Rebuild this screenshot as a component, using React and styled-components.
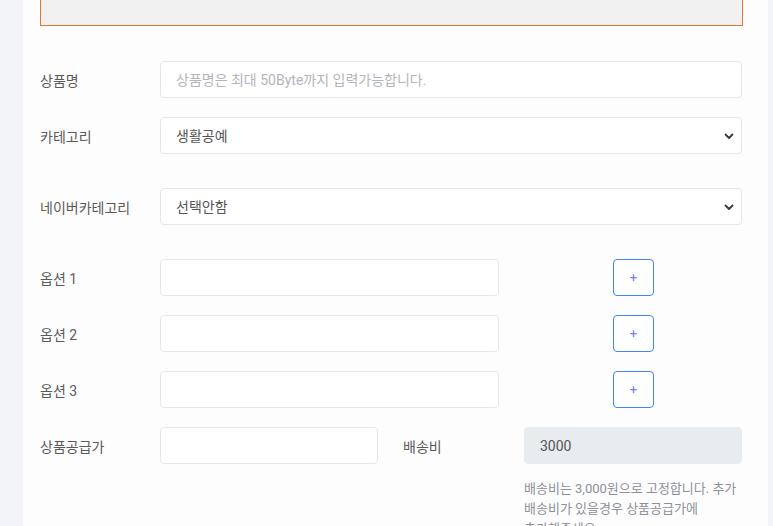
import styled, { createGlobalStyle } from 'styled-components'

const GlobalStyle = createGlobalStyle`
  html, body {
    margin: 0;
    padding: 0;
    background: #f3f4f8;
  }
  body {
    font-family: Roboto, "Noto Sans CJK KR", "Noto Sans", sans-serif;
    color: #555;
  }
`

const Chevron = () => (
  <svg width='10' height='8' viewBox='0 0 10 8'>
    <path d='M1.5 2.5 L5 6 L8.5 2.5' fill='none' stroke='#343a40' strokeWidth='1.8' strokeLinecap='round' strokeLinejoin='round' />
  </svg>
)

const App = () => {
  return (
    <>
      <GlobalStyle />
      <Viewport>
        <Card>
          <Notice>
            <NoticeTitle>상품 정보 등록 안내</NoticeTitle>
          </Notice>

          <Row $mb={19}>
            <Label>상품명</Label>
            <Input placeholder='상품명은 최대 50Byte까지 입력가능합니다.' />
          </Row>

          <Row $mb={34}>
            <Label>카테고리</Label>
            <SelectWrap>
              <Select defaultValue='생활공예'>
                <option>생활공예</option>
              </Select>
              <Arrow><Chevron /></Arrow>
            </SelectWrap>
          </Row>

          <Row $mb={34}>
            <Label>네이버카테고리</Label>
            <SelectWrap>
              <Select defaultValue='선택안함'>
                <option>선택안함</option>
              </Select>
              <Arrow><Chevron /></Arrow>
            </SelectWrap>
          </Row>

          {[1, 2, 3].map((n) => (
            <Row key={n} $cols='120px 339px 114px 41px' $mb={19}>
              <Label>옵션 {n}</Label>
              <Input />
              <span />
              <AddButton type='button'>+</AddButton>
            </Row>
          ))}

          <Row $cols='120px 218px 146px 218px' $mb={15}>
            <Label>상품공급가</Label>
            <Input />
            <Label $indent={25}>배송비</Label>
            <Input value='3000' disabled readOnly />
          </Row>

          <Row $cols='484px 218px' $mb={0}>
            <span />
            <Help>
              배송비는 3,000원으로 고정합니다. 추가
              <br />
              배송비가 있을경우 상품공급가에
              <br />
              추가해주세요.
            </Help>
          </Row>
        </Card>
      </Viewport>
    </>
  )
}

const Viewport = styled.div`
  height: 526px;
  overflow: hidden;
  display: flex;
  padding: 0 5px 0 23px;
`

const Card = styled.div`
  flex: 1;
  background: #fdfdfe;
  padding: 0 25px 0 17px;
  margin-top: -44px;
`

const Notice = styled.div`
  width: 703px;
  height: 70px;
  box-sizing: border-box;
  background: #f1f1f2;
  border: 1px solid #e5722c;
  padding-top: 24px;
  text-align: center;
  margin-bottom: 35px;
`

const NoticeTitle = styled.div`
  font-size: 16px;
  line-height: 22px;
  font-weight: 700;
  color: #2b2b35;
`

const Row = styled.div`
  display: grid;
  grid-template-columns: ${(p) => p.$cols || '120px 582px'};
  align-items: center;
  margin-bottom: ${(p) => p.$mb}px;
`

const Label = styled.label`
  font-size: 14px;
  color: #5a5a5a;
  padding-left: ${(p) => p.$indent || 0}px;
`

const Input = styled.input`
  height: 37px;
  width: 100%;
  box-sizing: border-box;
  border: 1px solid #e6e7ee;
  border-radius: 4px;
  background: #fff;
  padding: 0 15px;
  font-family: Roboto, "Noto Sans CJK KR", sans-serif;
  font-size: 14px;
  color: #555;
  outline: none;

  &::placeholder {
    color: #b3b5bc;
  }

  &:disabled {
    background: #e9ecef;
    border-color: #e9ecef;
    color: #555;
  }
`

const SelectWrap = styled.div`
  position: relative;
`

const Select = styled.select`
  appearance: none;
  width: 100%;
  height: 37px;
  box-sizing: border-box;
  border: 1px solid #e6e7ee;
  border-radius: 4px;
  background: #fff;
  padding: 0 15px;
  font-family: Roboto, "Noto Sans CJK KR", sans-serif;
  font-size: 14px;
  color: #555;
  outline: none;
`

const Arrow = styled.span`
  position: absolute;
  right: 8px;
  top: 50%;
  transform: translateY(-50%);
  display: flex;
  pointer-events: none;
`

const AddButton = styled.button`
  height: 37px;
  width: 41px;
  box-sizing: border-box;
  border: 1px solid #3d85ff;
  border-radius: 4px;
  background: #fff;
  color: #6f7cf5;
  font-size: 13px;
  font-family: Roboto, sans-serif;
  padding: 0;
  cursor: pointer;
`

const Help = styled.p`
  margin: 0;
  font-size: 13px;
  line-height: 20px;
  color: #8d9097;
`

export default App
